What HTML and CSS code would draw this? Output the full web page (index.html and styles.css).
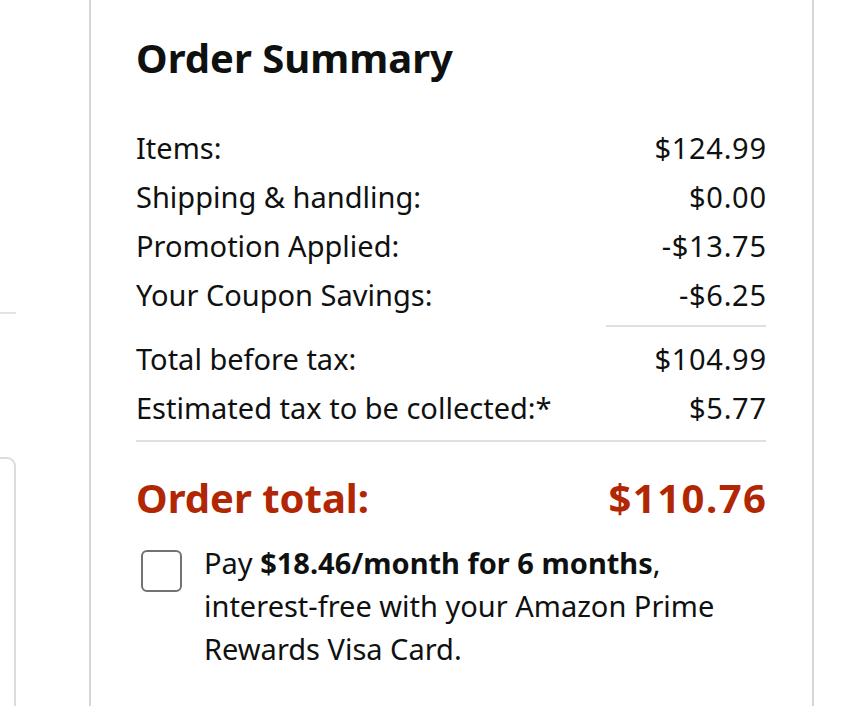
FILE: index.html
```html
<!DOCTYPE html>
<html lang="en">
<head>
<meta charset="utf-8">
<title>Order Summary</title>
<link rel="stylesheet" href="styles.css">
</head>
<body>
<div class="page">
  <div class="rail">
    <div class="rail-rule"></div>
    <div class="rail-box"></div>
  </div>
  <div class="divider-v"></div>
  <section class="summary">
    <h2 class="title">Order Summary</h2>
    <div class="rows">
      <div class="row"><span>Items:</span><span class="val">$124.99</span></div>
      <div class="row"><span>Shipping &amp; handling:</span><span class="val">$0.00</span></div>
      <div class="row"><span>Promotion Applied:</span><span class="val">-$13.75</span></div>
      <div class="row"><span>Your Coupon Savings:</span><span class="val">-$6.25</span></div>
    </div>
    <div class="rule-short"></div>
    <div class="rows">
      <div class="row"><span>Total before tax:</span><span class="val">$104.99</span></div>
      <div class="row"><span>Estimated tax to be collected:*</span><span class="val">$5.77</span></div>
    </div>
    <div class="rule-full"></div>
    <div class="total"><span>Order total:</span><span class="val-total">$110.76</span></div>
    <div class="pay">
      <span class="checkbox"></span>
      <p class="pay-text">Pay <b>$18.46/month for 6 months</b>, interest-free with your Amazon Prime Rewards Visa Card.</p>
    </div>
  </section>
  <div class="divider-v"></div>
  <div class="filler"></div>
</div>
</body>
</html>
```
FILE: styles.css
```css
* { box-sizing: border-box; }
html, body { margin: 0; padding: 0; background: #fff; }
body {
  font-family: "Noto Sans", "Liberation Sans", sans-serif;
  color: #0f1111;
  width: 848px;
  height: 706px;
  overflow: hidden;
}
.page {
  display: flex;
  height: 706px;
  overflow: hidden;
}
.rail {
  width: 89px;
  flex: none;
  padding-top: 312px;
}
.rail-rule {
  width: 16px;
  height: 2px;
  background: #e3e3e3;
}
.rail-box {
  margin-top: 143px;
  width: 16px;
  height: 251px;
  border: 2px solid #dcdcdc;
  border-left: none;
  border-bottom: none;
  border-radius: 0 9px 0 0;
}
.divider-v {
  width: 2px;
  background: #d5d5d5;
  flex: none;
}
.summary {
  width: 721px;
  flex: none;
  padding: 30px 46px 0 45px;
}
.filler { flex: 1; }
.title {
  margin: 0 0 37px;
  font-size: 40px;
  font-weight: 700;
  line-height: 56px;
}
.row {
  display: flex;
  justify-content: space-between;
  font-size: 29px;
  line-height: 49px;
}
.val {
  letter-spacing: 0.7px;
  margin-right: -0.7px;
}
.rule-short {
  margin: 6px 0 7px auto;
  width: 160px;
  height: 2px;
  background: #e0e0e0;
}
.rule-full {
  margin: 8px 0 30px;
  height: 2px;
  background: #e0e0e0;
}
.total {
  display: flex;
  justify-content: space-between;
  color: #b12704;
  font-size: 40px;
  font-weight: 700;
  line-height: 52px;
}
.val-total {
  letter-spacing: 1.5px;
  margin-right: -1.5px;
}
.pay {
  display: flex;
  align-items: flex-start;
  gap: 22px;
  margin-top: 17px;
  font-size: 29px;
  line-height: 43px;
}
.checkbox {
  flex: none;
  width: 41px;
  height: 42px;
  margin: 9px 0 0 5px;
  border: 2px solid #6f7373;
  border-radius: 6px;
  background: #fff;
}
.pay-text {
  margin: 0;
  width: 540px;
}
.pay-text b { font-weight: 700; }
```
